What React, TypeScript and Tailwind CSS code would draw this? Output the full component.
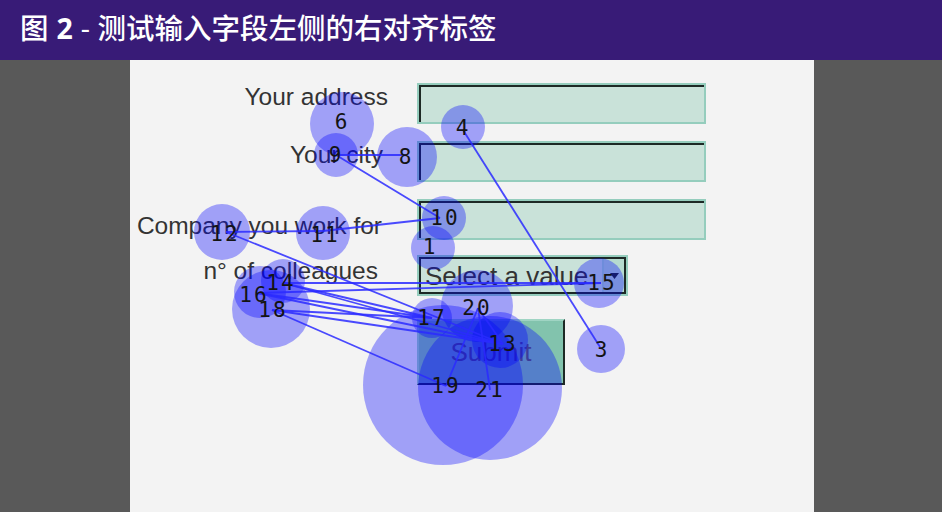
import React from "react";

type Fix = { n: number; x: number; y: number; r: number; lx?: number; ly?: number };

const fixes: Fix[] = [
  { n: 19, x: 443, y: 385, r: 80, lx: 446, ly: 386 },
  { n: 21, x: 490, y: 388, r: 72, lx: 490, ly: 390 },
  { n: 18, x: 271, y: 309, r: 39, lx: 273, ly: 310 },
  { n: 20, x: 477, y: 306, r: 36, lx: 477, ly: 308 },
  { n: 6, x: 342, y: 124, r: 32, lx: 342, ly: 122 },
  { n: 8, x: 407, y: 157, r: 30, lx: 406, ly: 157 },
  { n: 12, x: 222, y: 232, r: 28, lx: 225, ly: 234 },
  { n: 11, x: 323, y: 233, r: 27, lx: 325, ly: 235 },
  { n: 13, x: 500, y: 340, r: 28, lx: 503, ly: 344 },
  { n: 16, x: 260, y: 292, r: 26, lx: 254, ly: 295 },
  { n: 15, x: 599, y: 283, r: 25, lx: 602, ly: 283 },
  { n: 3, x: 601, y: 349, r: 24, lx: 602, ly: 350 },
  { n: 1, x: 433, y: 248, r: 22, lx: 430, ly: 247 },
  { n: 4, x: 463, y: 127, r: 22, lx: 463, ly: 128 },
  { n: 9, x: 336, y: 155, r: 22, lx: 336, ly: 155 },
  { n: 10, x: 444, y: 218, r: 22, lx: 445, ly: 218 },
  { n: 14, x: 283, y: 281, r: 22, lx: 281, ly: 283 },
  { n: 17, x: 432, y: 318, r: 20, lx: 432, ly: 318 },
];

const pts: Record<number, [number, number]> = {
  1: [430, 247],
  3: [600, 347],
  4: [463, 130],
  8: [406, 155],
  9: [336, 155],
  10: [440, 218],
  11: [323, 231],
  12: [226, 232],
  13: [503, 344],
  14: [283, 283],
  15: [601, 283],
  16: [257, 293],
  17: [432, 318],
  18: [272, 310],
  19: [446, 386],
  20: [478, 308],
  21: [490, 390],
};

const links: [number, number][] = [
  [4, 3],
  [9, 8],
  [9, 10],
  [10, 11],
  [11, 12],
  [12, 13],
  [13, 14],
  [14, 15],
  [15, 16],
  [16, 17],
  [17, 18],
  [18, 19],
  [19, 20],
  [20, 21],
  [20, 13],
  [16, 13],
  [14, 17],
  [18, 13],
];

function TextInput() {
  return (
    <div className="ml-[29px] w-[289px] h-[41px] border-2 border-[#95cdbd]">
      <div className="h-full border-t-2 border-l-2 border-[#1d2925] bg-[#c9e2d9]" />
    </div>
  );
}

export default function App() {
  const label = "text-[24.5px] leading-[28px] text-[#333] text-right w-[258px] shrink-0";
  return (
    <div
      className="relative w-[942px] h-[512px] overflow-hidden bg-[#595959]"
      style={{ fontFamily: "'Liberation Sans', Arial, sans-serif" }}
    >
      <div
        className="h-[60px] bg-[#381b77] flex items-center pl-[20px] pb-[3px] text-white text-[28.5px]"
        style={{ fontFamily: "'Open Sans', 'Noto Sans CJK SC', sans-serif" }}
      >
        <span className="font-medium">图 </span>
        <span className="font-bold mx-[8px]">2</span>
        <span className="font-medium">- 测试输入字段左侧的右对齐标签</span>
      </div>
      <div className="ml-[130px] w-[684px] h-[452px] bg-[#f3f3f3] pt-[23px] flex flex-col">
        <div className="flex">
          <div className={label}>Your address</div>
          <TextInput />
        </div>
        <div className="flex mt-[17px]">
          <div className={label + " pr-[5px]"}>Your city</div>
          <TextInput />
        </div>
        <div className="flex mt-[17px]">
          <div className={label + " pr-[6px] pt-[13px]"}>Company you work for</div>
          <TextInput />
        </div>
        <div className="flex mt-[15px]">
          <div className={label + " pr-[10px] pt-[2px]"}>n° of colleagues</div>
          <div className="ml-[29px] w-[211px] h-[41px] border-2 border-[#95cdbd]">
            <div className="h-full border-2 border-[#1d2925] bg-[#c9e2d9] flex items-center overflow-hidden">
              <span className="flex-1 pl-[4px] text-[26px] leading-[28px] text-[#333] whitespace-nowrap">Select a value</span>
              <div className="w-[22px] shrink-0 h-full border-l-2 border-[#a8d6c8] bg-[#b6dbcf] flex items-center justify-center">
                <svg width="9" height="6" viewBox="0 0 9 6">
                  <path d="M0 0 L9 0 L4.5 6 Z" fill="#1d2925" />
                </svg>
              </div>
            </div>
          </div>
        </div>
        <div className="mt-[23px] ml-[287px] w-[148px] h-[66px] bg-[#82c3ad] border-t-2 border-l-2 border-[#9fd4c3] border-r-2 border-b-2 border-r-[#1d2925] border-b-[#1d2925] flex items-center justify-center">
          <span className="text-[26px] leading-[28px] text-[#5c5c66]">Submit</span>
        </div>
      </div>

      <svg
        className="absolute top-0 left-0 pointer-events-none"
        width="942"
        height="512"
        viewBox="0 0 942 512"
      >
        {fixes.map((f) => (
          <circle key={"c" + f.n} cx={f.x} cy={f.y} r={f.r} fill="#0000ff" fillOpacity={0.34} />
        ))}
        {links.map(([a, b], i) => (
          <line
            key={"l" + i}
            x1={pts[a][0]}
            y1={pts[a][1]}
            x2={pts[b][0]}
            y2={pts[b][1]}
            stroke="#2a2aff"
            strokeWidth={1.8}
            strokeOpacity={0.85}
          />
        ))}
        {fixes.map((f) => (
          <text
            key={"t" + f.n}
            x={f.lx ?? f.x}
            y={f.ly ?? f.y}
            textAnchor="middle"
            dominantBaseline="central"
            fontFamily="'DejaVu Sans Mono', monospace"
            fontSize={21}
            letterSpacing={2}
            fill="#141414"
          >
            {f.n}
          </text>
        ))}
      </svg>
    </div>
  );
}
